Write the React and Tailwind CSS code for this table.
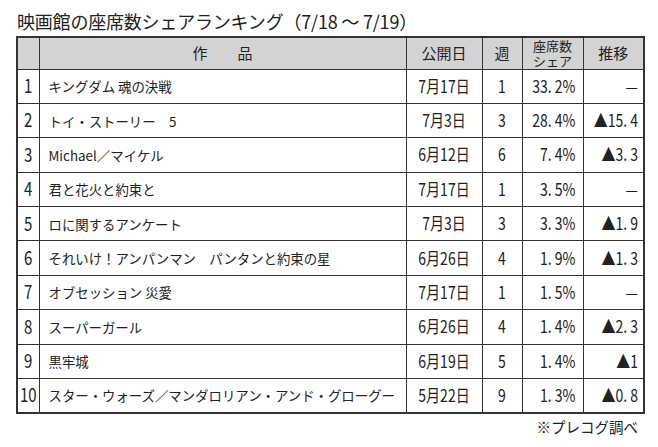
const rows = [
  { rank: "1", title: "キングダム 魂の決戦", date: "7月17日", week: "1", share: "33. 2%", trend: "—" },
  { rank: "2", title: "トイ・ストーリー　5", date: "7月3日", week: "3", share: "28. 4%", trend: "▲15. 4" },
  { rank: "3", title: "Michael／マイケル", date: "6月12日", week: "6", share: "7. 4%", trend: "▲3. 3" },
  { rank: "4", title: "君と花火と約束と", date: "7月17日", week: "1", share: "3. 5%", trend: "—" },
  { rank: "5", title: "ロに関するアンケート", date: "7月3日", week: "3", share: "3. 3%", trend: "▲1. 9" },
  { rank: "6", title: "それいけ！アンパンマン　パンタンと約束の星", date: "6月26日", week: "4", share: "1. 9%", trend: "▲1. 3" },
  { rank: "7", title: "オブセッション 災愛", date: "7月17日", week: "1", share: "1. 5%", trend: "—" },
  { rank: "8", title: "スーパーガール", date: "6月26日", week: "4", share: "1. 4%", trend: "▲2. 3" },
  { rank: "9", title: "黒牢城", date: "6月19日", week: "5", share: "1. 4%", trend: "▲1" },
  { rank: "10", title: "スター・ウォーズ／マンダロリアン・アンド・グローグー", date: "5月22日", week: "9", share: "1. 3%", trend: "▲0. 8" },
];

// condensed-looking figures: stretch the glyphs vertically
function Num({ children }) {
  return <span className="inline-block scale-y-[1.25] whitespace-pre">{children}</span>;
}

export default function App() {
  return (
    <div className="w-[658px] h-[447px] bg-white text-[#222] font-['Noto_Sans_CJK_JP',sans-serif]">
      <div className="pt-[9px] pl-[17px] text-[18px] leading-[24px] tracking-[-0.2px]">
        映画館の座席数シェアランキング（7/18 ～ 7/19）
      </div>

      <table className="ml-[16px] mt-[3px] w-[627px] table-fixed border-collapse border-2 border-[#333]">
        <colgroup>
          <col className="w-[22px]" />
          <col className="w-[367px]" />
          <col className="w-[76px]" />
          <col className="w-[40px]" />
          <col className="w-[61px]" />
          <col className="w-[61px]" />
        </colgroup>
        <thead>
          <tr className="h-[32px] bg-[#d3d3d3] text-[15px]">
            <th className="border border-[#333] font-normal"></th>
            <th className="border border-[#333] font-normal">作　　品</th>
            <th className="border border-[#333] font-normal">公開日</th>
            <th className="border border-[#333] font-normal">週</th>
            <th className="border border-[#333] font-normal text-[13px] leading-[15px]">
              座席数
              <br />
              シェア
            </th>
            <th className="border border-[#333] font-normal">推移</th>
          </tr>
        </thead>
        <tbody>
          {rows.map((r) => (
            <tr key={r.rank} className="h-[34.4px]">
              <td className="border border-[#333] text-center px-0 text-[15px]">
                <Num>{r.rank}</Num>
              </td>
              <td className="border border-[#333] pl-[9px] text-[13.4px] whitespace-nowrap">{r.title}</td>
              <td className="border border-[#333] text-center text-[14px]">
                <Num>{r.date}</Num>
              </td>
              <td className="border border-[#333] text-center text-[14px]">
                <Num>{r.week}</Num>
              </td>
              <td className="border border-[#333] text-right pr-[7px] text-[14px]">
                <Num>{r.share}</Num>
              </td>
              <td className="border border-[#333] text-right pr-[5px] text-[14px]">
                <Num>{r.trend}</Num>
              </td>
            </tr>
          ))}
        </tbody>
      </table>

      <div className="w-[638px] text-right text-[14.5px] leading-[20px] mt-[3px]">※プレコグ調べ</div>
    </div>
  );
}
